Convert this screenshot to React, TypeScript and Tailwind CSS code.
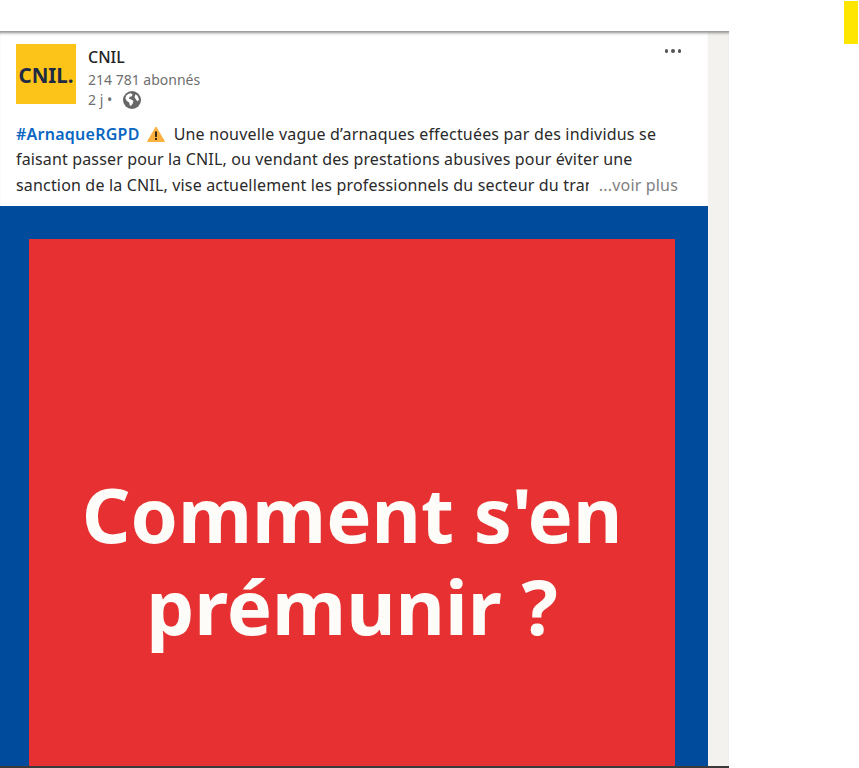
const sans = "font-['Noto_Sans','Open_Sans',sans-serif]";

function WarningIcon() {
  return (
    <svg viewBox="0 0 18 16" className="ml-[7px] mr-[9px] inline-block h-[16px] w-[18px] align-[-2px]">
      <path d="M9 1 L17.5 15.5 H0.5 Z" fill="#fbb040" stroke="#fbb040" strokeLinejoin="round" />
      <rect x="8" y="5.5" width="2" height="5.5" fill="#3a2a14" />
      <rect x="8" y="12" width="2" height="2" fill="#3a2a14" />
    </svg>
  );
}

function GlobeIcon() {
  return (
    <svg viewBox="0 0 18 18" className="ml-[11px] h-[18px] w-[18px]">
      <circle cx="9" cy="9" r="9" fill="#666666" />
      <path
        d="M3.2 4.6 C4.4 3.2 6 2.4 7.8 2.2 L9.6 3.6 L8.6 5.4 L6.6 5.8 L6 7.8 L8.4 8.6 L10.4 10 L9.8 12.6 L8 14.8 L6.8 14.6 L6.2 11.6 L3.8 10 L2.4 7.6 Z"
        fill="#ffffff"
      />
      <path d="M12.4 3.2 C14.4 4.4 15.8 6.4 15.9 8.8 L14.6 10.4 L13 8.4 L11.6 6.4 Z" fill="#ffffff" />
    </svg>
  );
}

function PostHeader() {
  return (
    <div className="flex pl-4 pr-[27px] pt-[13px]">
      <div className="flex h-[60px] w-[60px] shrink-0 items-center justify-center bg-[#fcc419] pt-[2px] text-[20.5px] font-bold leading-none text-[#1f2a44]">
        CNIL.
      </div>
      <div className="ml-[12px] flex-1">
        <div className="pt-[3px] text-[16px] font-medium leading-[21px] text-[#252525]">CNIL</div>
        <div className="pt-[2px] text-[14px] leading-[20px] text-[#6f6f6f]">214 781 abonnés</div>
        <div className="flex h-[19px] items-center text-[14px] leading-[19px] text-[#6f6f6f]">
          2 j •
          <GlobeIcon />
        </div>
      </div>
      <div className="flex h-[16px] gap-[3px] pt-[5px]">
        <span className="h-[3.5px] w-[3.5px] rounded-full bg-[#555555]" />
        <span className="h-[3.5px] w-[3.5px] rounded-full bg-[#555555]" />
        <span className="h-[3.5px] w-[3.5px] rounded-full bg-[#555555]" />
      </div>
    </div>
  );
}

function PostText() {
  return (
    <div className="px-4 pb-[8px] pt-[13px] text-[16px] leading-[25.3px] tracking-[0.17px] text-[#2a2a2a]">
      <div className="whitespace-nowrap tracking-[0.19px]">
        <span className="font-semibold tracking-[0.25px] text-[#0a66c2]">#ArnaqueRGPD</span>
        <WarningIcon />
        Une nouvelle vague d’arnaques effectuées par des individus se
      </div>
      <div className="whitespace-nowrap tracking-[0.145px]">
        faisant passer pour la CNIL, ou vendant des prestations abusives pour éviter une
      </div>
      <div className="flex justify-between whitespace-nowrap">
        <span className="w-[573px] overflow-hidden">
          sanction de la CNIL, vise actuellement les professionnels du secteur du tran
        </span>
        <span className="pr-[14px] text-[#7f7f7f]">...voir plus</span>
      </div>
    </div>
  );
}

export default function App() {
  return (
    <div className={`flex h-[768px] overflow-hidden bg-white ${sans}`}>
      <div className="flex w-[729px] shrink-0 flex-col">
        <div className="h-[31px] shrink-0 bg-white" />
        <div className="flex min-h-0 flex-1 border-b-2 border-[#3a3a3a] bg-[#f3f2ef] shadow-[inset_0_4px_3px_-2px_#8f8f8f]">
          <div className="flex w-[708px] flex-col bg-white shadow-[inset_0_4px_3px_-2px_#8f8f8f]">
            <PostHeader />
            <PostText />
            <div className="min-h-0 flex-1 bg-[#004b9b] px-[29px] pt-[33px]">
              <div className="flex h-full w-[646px] flex-col items-center bg-[#e63031] pt-[229px] text-center text-[76px] font-bold leading-[92px] text-[#fdfcf8]">
                <div className="blur-[0.5px]">Comment s'en</div>
                <div className="blur-[0.5px]">prémunir ?</div>
              </div>
            </div>
          </div>
        </div>
      </div>
      <div className="flex-1 pl-[115px] pt-px">
        <div className="h-[43px] w-[14px] bg-[#ffe600]" />
      </div>
    </div>
  );
}
